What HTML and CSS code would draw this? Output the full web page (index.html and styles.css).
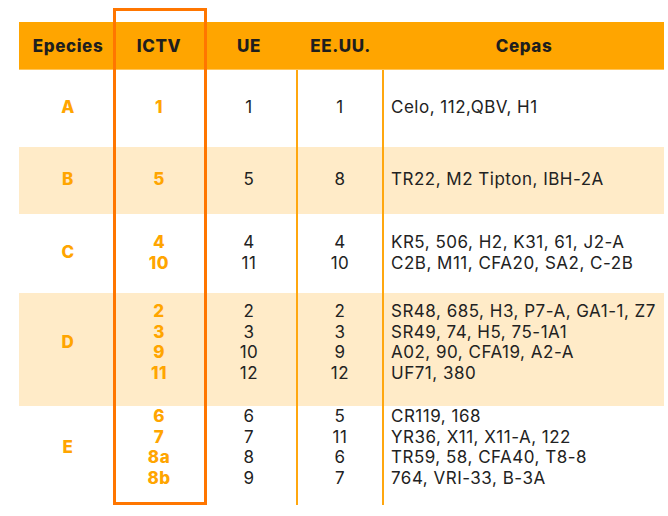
FILE: index.html
```html
<!DOCTYPE html>
<html lang="es">
<head>
<meta charset="utf-8">
<title>Cepas</title>
<link rel="stylesheet" href="styles.css">
</head>
<body>
<div class="table">
  <div class="row head">
    <div class="c c1">Epecies</div>
    <div class="c c2">ICTV</div>
    <div class="c c3">UE</div>
    <div class="c c4">EE.UU.</div>
    <div class="c c5 center">Cepas</div>
  </div>
  <div class="row r-a">
    <div class="c c1 sp">A</div>
    <div class="c c2 or">1</div>
    <div class="c c3">1</div>
    <div class="c c4">1</div>
    <div class="c c5">Celo, 112,QBV, H1</div>
  </div>
  <div class="row r-b stripe">
    <div class="c c1 sp">B</div>
    <div class="c c2 or">5</div>
    <div class="c c3">5</div>
    <div class="c c4">8</div>
    <div class="c c5">TR22, M2 Tipton, IBH-2A</div>
  </div>
  <div class="row r-c">
    <div class="c c1 sp">C</div>
    <div class="c c2 or">4<br>10</div>
    <div class="c c3">4<br>11</div>
    <div class="c c4">4<br>10</div>
    <div class="c c5">KR5, 506, H2, K31, 61, J2-A<br>C2B, M11, CFA20, SA2, C-2B</div>
  </div>
  <div class="row r-d stripe">
    <div class="c c1 sp">D</div>
    <div class="c c2 or">2<br>3<br>9<br>11</div>
    <div class="c c3">2<br>3<br>10<br>12</div>
    <div class="c c4">2<br>3<br>9<br>12</div>
    <div class="c c5">SR48, 685, H3, P7-A, GA1-1, Z7<br>SR49, 74, H5, 75-1A1<br>A02, 90, CFA19, A2-A<br>UF71, 380</div>
  </div>
  <div class="row r-e">
    <div class="c c1 sp">E</div>
    <div class="c c2 or">6<br>7<br>8a<br>8b</div>
    <div class="c c3">6<br>7<br>8<br>9</div>
    <div class="c c4">5<br>11<br>6<br>7</div>
    <div class="c c5">CR119, 168<br>YR36, X11, X11-A, 122<br>TR59, 58, CFA40, T8-8<br>764, VRI-33, B-3A</div>
  </div>
  <div class="ictv-box"></div>
</div>
</body>
</html>
```
FILE: styles.css
```css
html, body {
  margin: 0;
  padding: 0;
  background: #ffffff;
}

body {
  font-family: "Inter", "DejaVu Sans", sans-serif;
  color: #222222;
}

.table {
  position: relative;
  margin: 22px 0 0 19px;
  width: 645px;
}

.row {
  display: grid;
  grid-template-columns: 98px 84px 96px 87px 280px;
  font-size: 17px;
  line-height: 20.5px;
  letter-spacing: 0.5px;
}

.head {
  height: 48px;
  background: #ffa500;
  font-weight: 800;
  color: #1e1e1e;
  align-items: center;
  border-bottom: 1px solid #ffc55a;
  box-sizing: border-box;
  padding-top: 2px;
  letter-spacing: 0.6px;
}

.c {
  text-align: center;
}

.c5 {
  text-align: left;
  padding-left: 9px;
}

.c5.center {
  text-align: center;
  padding-left: 0;
}

.row:not(.head) .c4 {
  border-left: 2px solid #ffa70f;
  border-right: 2px solid #ffa70f;
  margin-left: -1px;
}

.row:not(.head) .c5 {
  margin-left: -2px;
}

.sp,
.or {
  color: #ffa500;
  font-weight: 800;
}

.stripe {
  background-color: #ffebc8;
}

.r-a { height: 77px; }
.r-a .c { padding-top: 27px; }
.r-a .sp { padding-top: 0; align-self: start; margin-top: 27px; }

.r-b { height: 67px; }
.r-b .c { padding-top: 22px; }
.r-b .sp { padding-top: 0; align-self: start; margin-top: 22px; }

.r-c { height: 79px; }
.r-c .c { padding-top: 18px; }
.r-c .sp { padding-top: 0; align-self: start; margin-top: 28px; }

.r-d { height: 113px; }
.r-d .c { padding-top: 8px; }
.r-d .sp { padding-top: 0; align-self: start; margin-top: 39px; }

.r-e { height: 99px; }
.r-e .c { padding-top: 0; }
.r-e .sp { padding-top: 0; align-self: start; margin-top: 31px; }

.row:not(.head) {
  box-sizing: border-box;
}

.ictv-box {
  position: absolute;
  left: 94px;
  top: -14px;
  width: 94px;
  height: 497px;
  box-sizing: border-box;
  border: 3px solid #ff7600;
  pointer-events: none;
}
```
